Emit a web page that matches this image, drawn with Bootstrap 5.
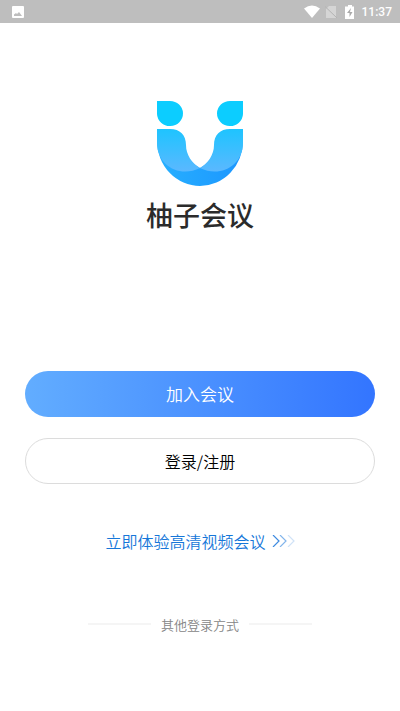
<!DOCTYPE html>
<html lang="zh-CN">
<head>
<meta charset="utf-8">
<meta name="viewport" content="width=device-width, initial-scale=1">
<title>柚子会议</title>
<link href="https://cdn.jsdelivr.net/npm/bootstrap@5.3.0/dist/css/bootstrap.min.css" rel="stylesheet">
<style>
  body { font-family: "Noto Sans CJK SC", sans-serif; font-weight: 350; background: #fff; }
  .status-bar { height: 23px; padding: 1px 8px 0 12px; background: #bebebe; color: #fff; font: 500 12px/22px Roboto, sans-serif; }
  .brand { padding-top: 78px; }
  .wordmark { font-size: 27px; line-height: 32px; font-weight: 500; color: #2b2b2b; margin-top: 12px; }
  .actions { padding: 0 25px; margin-top: 140px; gap: 21px; }
  .pill { height: 46px; padding: 0; line-height: 24px; font-weight: 350; }
  .pill-join { font-size: 17px; color: #fff; border: 0; background: linear-gradient(90deg, #62adff, #3375ff); }
  .pill-join:hover { color: #fff; }
  .pill-login { font-size: 16px; color: #000; border: 1px solid #dcdcdc; background: #fff; }
  .trial { margin-top: 45px; gap: 6px; font-size: 16px; line-height: 24px; color: #1677d9; }
  .others { margin: 62px 88px 0; gap: 10px; font-size: 13px; line-height: 20px; color: #858585; }
  .rule { height: 2px; margin-bottom: 2px; background: #f5f5f5; }
</style>
<script src="https://cdn.jsdelivr.net/npm/bootstrap@5.3.0/dist/js/bootstrap.bundle.min.js" defer></script>
</head>
<body>
<header class="status-bar d-flex align-items-center justify-content-between">
  <svg width="12" height="12" viewBox="0 0 12 12" aria-hidden="true">
    <rect width="12" height="12" rx="1" fill="#fff"/>
    <path d="M2 10V8.500l2-1.500 1 1 2-2 3 4z" fill="#bebebe"/>
  </svg>
  <div class="d-flex align-items-center">
    <svg width="54" height="16" viewBox="0 0 54 16" aria-hidden="true">
      <path d="M-1 4.500Q7-1.500 15 4.500L7 14z" fill="#fff" transform="translate(1)"/>
      <path d="M25 2h7v12H22V5z" fill="#d5d5d5"/>
      <path d="M21 2.500 33 14" stroke="#b4b4b4"/>
      <path d="M44 1h4v1.500h2V15h-9V2.500h3z" fill="#fff"/>
      <path d="m47 4-4 5h2.500v4l3-5H46z" fill="#aaa"/>
    </svg>
    <span class="ms-1">11:37</span>
  </div>
</header>
<main>
  <div class="brand d-flex flex-column align-items-center">
    <svg width="86" height="86" viewBox="0 0 86 86" role="img" aria-label="柚子会议">
      <defs>
        <linearGradient id="lobe" x1="0" y1="0" x2="0" y2="1"><stop stop-color="#1ec4ff"/><stop offset="1" stop-color="#5bb8ff"/></linearGradient>
        <linearGradient id="bowl" x1="0" y1="0" x2="1" y2="0"><stop stop-color="#27b0ff"/><stop offset="1" stop-color="#1c96ff"/></linearGradient>
      </defs>
      <path d="M0 0H13A13 12.500 0 1 1 0 13zM86 0H73A13 12.500 0 1 0 86 13z" fill="#0ccdff"/>
      <path d="M0 40A43 45 0 0 0 43 85A43 45 0 0 0 86 40L43 67z" fill="url(#bowl)"/>
      <path d="M0 28H13C23 28 29 34 29 44C29 54 35 62 43 67C23 77 0 65 0 42z" fill="url(#lobe)"/>
      <path d="M86 28H73C63 28 57 34 57 44C57 54 51 62 43 67C63 77 86 65 86 42z" fill="url(#lobe)"/>
    </svg>
    <h1 class="wordmark mb-0">柚子会议</h1>
  </div>
  <div class="actions d-flex flex-column">
    <button type="button" class="btn pill pill-join rounded-pill w-100">加入会议</button>
    <button type="button" class="btn pill pill-login rounded-pill w-100">登录/注册</button>
  </div>
  <a href="#" class="trial d-flex align-items-center justify-content-center text-decoration-none">
    <span>立即体验高清视频会议</span>
    <svg width="23" height="12" viewBox="0 0 23 12" fill="none" stroke-width="1.200" aria-hidden="true">
      <path d="m1 0 6 6-6 6" stroke="#3f8be0"/>
      <path d="m8 0 6 6-6 6" stroke="#83b5eb"/>
      <path d="m16 0 6 6-6 6" stroke="#d0e2f7"/>
    </svg>
  </a>
  <div class="others d-flex align-items-center">
    <span class="rule flex-fill"></span>
    <span>其他登录方式</span>
    <span class="rule flex-fill"></span>
  </div>
</main>
</body>
</html>
